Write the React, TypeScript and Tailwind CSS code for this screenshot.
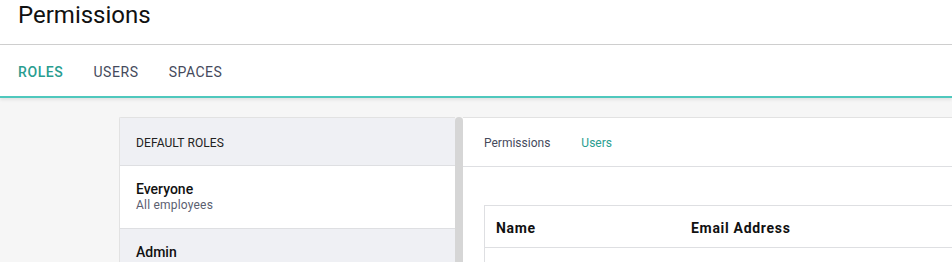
export default function App() {
  return (
    <div className="w-[952px] h-[262px] overflow-hidden bg-[#f6f6f6] font-['Roboto',sans-serif]">
      {/* Title */}
      <div className="h-[45px] bg-white border-b border-[#cfcfcf] shadow-[0_1px_2px_rgba(0,0,0,0.08)] pl-[18px] flex items-start">
        <h1 className="text-[24px] leading-[30px] text-[#111] font-normal">Permissions</h1>
      </div>

      {/* Main tabs */}
      <div className="h-[53px] bg-white border-b-2 border-[#4fc8bd] shadow-[0_2px_3px_rgba(0,0,0,0.08)] pl-[18px] pt-[3px] flex items-center gap-[30px] text-[14px] font-medium tracking-[0.6px]">
        <span className="text-[#2a9d90]">ROLES</span>
        <span className="text-[#454a5c] font-normal tracking-[0.6px]">USERS</span>
        <span className="text-[#454a5c] font-normal tracking-[0.5px]">SPACES</span>
      </div>

      <div className="pt-[19px] pl-[119px] flex">
        {/* Roles list */}
        <div className="w-[336px] border-t border-l border-[#e2e2e2] rounded-tl-[2px]">
          <div className="h-[48px] bg-[#eff0f4] border-b border-[#dedfe2] pl-[16px] pt-[2px] flex items-center text-[12px] text-[#222] tracking-[0.1px]">
            DEFAULT ROLES
          </div>
          <div className="h-[63px] bg-white border-b border-[#dedfe2] pl-[16px] pt-[15px]">
            <div className="text-[14px] font-medium text-[#111] leading-[17px]">Everyone</div>
            <div className="text-[12px] text-[#5b6070] leading-[15px] tracking-[0.2px]">All employees</div>
          </div>
          <div className="h-[40px] bg-[#eff0f4] pl-[16px] pt-[15px]">
            <div className="text-[14px] font-medium text-[#111] leading-[17px]">Admin</div>
          </div>
        </div>

        {/* Scrollbar */}
        <div className="w-[8px] h-[150px] bg-[#d6d6d6] rounded-t-[4px]" />

        {/* Role details */}
        <div className="flex-1 bg-white border-t border-[#e2e2e2]">
          <div className="h-[49px] border-b border-[#dedfe2] pl-[21px] pt-[2px] flex items-center gap-[31px] text-[12px]">
            <span className="text-[#454a5c]">Permissions</span>
            <span className="text-[#2a9d90]">Users</span>
          </div>
          <div className="pl-[21px] pt-[38px]">
            <div className="border-t border-l border-[#dedfe2] h-[60px]">
              <div className="h-[42px] border-b border-[#dedfe2] pt-[4px] flex items-center text-[14px] font-bold text-[#111] tracking-[0.7px]">
                <span className="w-[206px] pl-[11px]">Name</span>
                <span>Email Address</span>
              </div>
            </div>
          </div>
        </div>
      </div>
    </div>
  );
}
